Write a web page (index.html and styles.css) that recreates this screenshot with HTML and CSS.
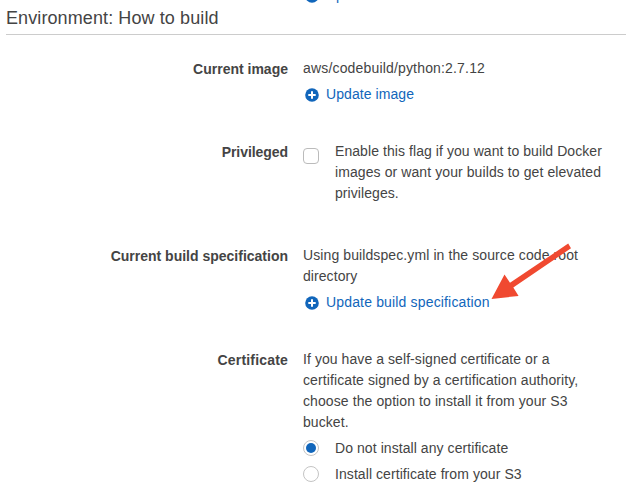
FILE: index.html
```html
<!DOCTYPE html>
<html lang="en">
<head>
<meta charset="utf-8">
<title>Environment: How to build</title>
<link rel="stylesheet" href="styles.css">
</head>
<body>
<svg width="0" height="0" class="defs" aria-hidden="true">
  <symbol id="plus" viewBox="0 0 14 14"><circle cx="7" cy="7" r="6.8" fill="#1166bb"/><path d="M7 3.3v7.4M3.3 7h7.4" stroke="#fff" stroke-width="2"/></symbol>
</svg>
<main class="page">
  <div class="previous"><a class="link"><svg class="plus"><use href="#plus"/></svg><span>Update source</span></a></div>
  <h2 class="title"><span class="t-title">Environment: How to build</span></h2>
  <section class="row">
    <div class="label"><span>Current image</span></div>
    <div class="value">
      <div class="line t-python">aws/codebuild/python:2.7.12</div>
      <a class="link"><svg class="plus"><use href="#plus"/></svg><span>Update image</span></a>
    </div>
  </section>
  <section class="row row-check">
    <div class="label"><span class="l-priv">Privileged</span></div>
    <div class="value option">
      <span class="checkbox"></span>
      <div>
        <div class="line">Enable this flag if you want to build Docker</div>
        <div class="line t-p2">images or want your builds to get elevated</div>
        <div class="line">privileges.</div>
      </div>
    </div>
  </section>
  <section class="row">
    <div class="label"><span class="l-spec">Current build specification</span></div>
    <div class="value">
      <div class="line t-b1">Using buildspec.yml in the source code root</div>
      <div class="line">directory</div>
      <a class="link"><svg class="plus"><use href="#plus"/></svg><span class="t-spec">Update build specification</span></a>
      <svg class="arrow" viewBox="0 0 82 58"><path d="M77.2 0.6L80 5.2L22.3 44.6L27.6 52.9L0.5 56L13.5 31.6L19 39.8Z" fill="#f04930"/></svg>
    </div>
  </section>
  <section class="row">
    <div class="label"><span class="l-cert">Certificate</span></div>
    <div class="value">
      <div class="line">If you have a self-signed certificate or a</div>
      <div class="line t-c2">certificate signed by a certification authority,</div>
      <div class="line t-c3">choose the option to install it from your S3</div>
      <div class="line">bucket.</div>
      <div class="option radio-option"><span class="radio on"></span><span>Do not install any certificate</span></div>
      <div class="option radio-option"><span class="radio"></span><span>Install certificate from your S3</span></div>
    </div>
  </section>
</main>
</body>
</html>
```
FILE: styles.css
```css
* { box-sizing: border-box; }
body {
  margin: 0;
  background: #fff;
  color: #444;
  font: 14px/21px "Liberation Sans", Arial, sans-serif;
  overflow: hidden;
}
.defs { display: block; }
.page { height: 501px; overflow: hidden; }
.previous { height: 6px; padding-left: 303px; display: flex; align-items: flex-end; }
.title {
  margin: 0 0 23px 6px;
  height: 29px;
  border-bottom: 1px solid #ccc;
  font-size: 18px;
  font-weight: 400;
  line-height: 24px;
}
.row { display: flex; margin-bottom: 36px; }
.row-check { padding-bottom: 5px; }
.label { width: 288px; margin-right: 15px; padding-top: 1px; text-align: right; font-weight: 700; }
.value { position: relative; width: 310px; flex: none; letter-spacing: 0.07px; }
.line { white-space: nowrap; }
.link { display: flex; align-items: center; height: 21px; margin-top: 5px; color: #1166bb; white-space: nowrap; flex: none; }
.plus { width: 14px; height: 14px; margin: 1px 7px 0 2px; flex: none; }
.option { display: flex; white-space: nowrap; }
.checkbox { width: 16px; height: 16px; margin: 7px 16px 0 0; border: 1px solid #bbb; border-radius: 4px; flex: none; }
.radio-option { margin-top: 5px; height: 21px; }
.radio { display: flex; align-items: center; justify-content: center; width: 16px; height: 16px; margin: 2px 16px 0 0; border: 1px solid #c4c4c4; border-radius: 50%; flex: none; }
.radio.on::after { content: ""; width: 10px; height: 10px; border-radius: 50%; background: #1166bb; }
.arrow { position: absolute; left: 188px; top: -2px; width: 82px; height: 58px; }

/* Tracking */
.t-title { letter-spacing: 0.1px; }
.t-python { letter-spacing: 0.17px; }
.t-p2 { letter-spacing: 0.09px; }
.t-b1 { letter-spacing: 0.1px; }
.t-spec { letter-spacing: 0.16px; }
.t-c2 { letter-spacing: 0.1px; }
.t-c3 { letter-spacing: 0.09px; }
.l-priv { letter-spacing: -0.06px; }
.l-cert { letter-spacing: 0.18px; }
```
